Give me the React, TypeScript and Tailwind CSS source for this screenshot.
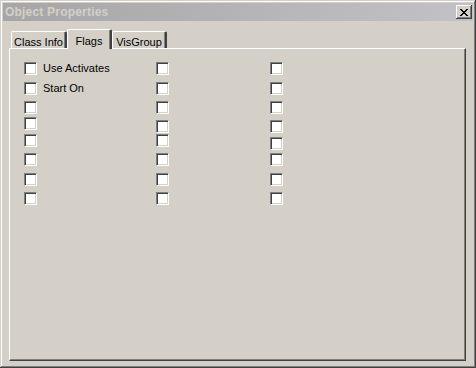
import React from "react";

const font = { fontFamily: '"Liberation Sans", Arial, sans-serif' };

// margin-top of each checkbox after the first, per column (the dialog isn't on a strict grid)
const columns = [
  { width: "w-[132px]", gaps: ["mt-0", "mt-[7px]", "mt-[6px]", "mt-[3px]", "mt-[4px]", "mt-[6px]", "mt-[7px]", "mt-[6px]"] },
  { width: "w-[114px]", gaps: ["mt-0", "mt-[7px]", "mt-[6px]", "mt-[6px]", "mt-[1px]", "mt-[6px]", "mt-[7px]", "mt-[6px]"] },
  { width: "w-[100px]", gaps: ["mt-0", "mt-[7px]", "mt-[6px]", "mt-[6px]", "mt-[4px]", "mt-[3px]", "mt-[7px]", "mt-[6px]"] },
];

const labels = ["Use Activates", "Start On"];

function Checkbox() {
  return (
    <div className="w-[13px] h-[13px] shrink-0 bg-white border border-t-[#808080] border-l-[#808080] border-b-white border-r-white shadow-[inset_1px_1px_#404040,inset_-1px_-1px_#d4d0c8]" />
  );
}

function CloseButton() {
  return (
    <div className="w-[16px] h-[14px] bg-[#d4d0c8] flex items-center justify-center shadow-[inset_-1px_-1px_#404040,inset_1px_1px_#ffffff,inset_-2px_-2px_#808080]">
      <svg width="8" height="7" viewBox="0 0 8 7" shapeRendering="crispEdges" className="mr-[1px]">
        <rect x="0" y="0" width="2" height="1" fill="#000" />
        <rect x="6" y="0" width="2" height="1" fill="#000" />
        <rect x="1" y="1" width="2" height="1" fill="#000" />
        <rect x="5" y="1" width="2" height="1" fill="#000" />
        <rect x="2" y="2" width="4" height="1" fill="#000" />
        <rect x="3" y="3" width="2" height="1" fill="#000" />
        <rect x="2" y="4" width="4" height="1" fill="#000" />
        <rect x="1" y="5" width="2" height="1" fill="#000" />
        <rect x="5" y="5" width="2" height="1" fill="#000" />
        <rect x="0" y="6" width="2" height="1" fill="#000" />
        <rect x="6" y="6" width="2" height="1" fill="#000" />
      </svg>
    </div>
  );
}

function Tab({ label, active, width }: { label: string; active?: boolean; width: string }) {
  if (active) {
    return (
      <div
        className={`${width} h-[20px] -mb-px relative z-10 bg-[#d4d0c8] border-l border-t border-r-2 border-l-white border-t-white border-r-[#404040] rounded-t-[2px] shadow-[inset_-1px_0_#808080] flex justify-center pt-[3px] text-[11px] text-black`}
      >
        {label}
      </div>
    );
  }
  return (
    <div
      className={`${width} h-[17px] bg-[#d4d0c8] border-l border-t border-r-2 border-l-white border-t-white border-r-[#404040] rounded-t-[2px] shadow-[inset_-1px_0_#808080] flex justify-center pt-[2px] text-[11px] text-black`}
    >
      {label}
    </div>
  );
}

export default function App() {
  return (
    <div
      style={font}
      className="w-[476px] h-[368px] bg-[#d4d0c8] p-[3px] flex flex-col shadow-[inset_-1px_-1px_#404040,inset_1px_1px_#d4d0c8,inset_-2px_-2px_#808080,inset_2px_2px_#ffffff]"
    >
      {/* Title bar (inactive) */}
      <div className="h-[18px] shrink-0 bg-gradient-to-r from-[#a6a6a6] to-[#c2c2c6] flex items-center justify-between pl-[2px] pr-[1px]">
        <span className="text-[12px] font-bold text-[#d4d0c8] leading-none tracking-[0.2px]">Object Properties</span>
        <CloseButton />
      </div>

      <div className="flex-1 flex flex-col pt-[8px] pl-[6px] pr-[7px] pb-[4px]">
        {/* Tabs */}
        <div className="h-[19px] flex items-end pl-[2px]">
          <Tab label="Class Info" width="w-[56px]" />
          <Tab label="Flags" width="w-[45px]" active />
          <Tab label="VisGroup" width="w-[55px]" />
        </div>

        {/* Tab panel */}
        <div className="flex-1 border border-l-white border-t-white border-r-[#404040] border-b-[#404040] shadow-[inset_-1px_-1px_#808080] pt-[13px] pl-[14px] flex">
          {columns.map((col, ci) => (
            <div key={ci} className={`${col.width} flex flex-col`}>
              {col.gaps.map((gap, ri) => (
                <div key={ri} className={`${gap} flex items-center h-[13px]`}>
                  <Checkbox />
                  {ci === 0 && labels[ri] && (
                    <span className="ml-[6px] text-[11px] text-black leading-none">{labels[ri]}</span>
                  )}
                </div>
              ))}
            </div>
          ))}
        </div>
      </div>
    </div>
  );
}
